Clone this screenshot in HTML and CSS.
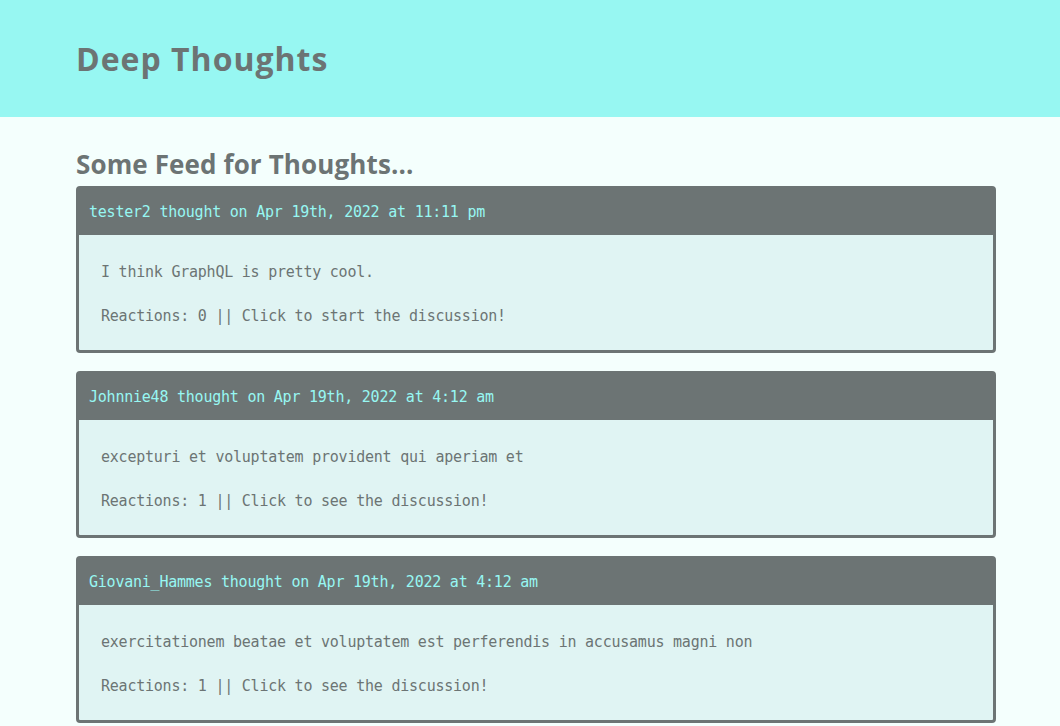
FILE: index.html
```html
<!DOCTYPE html>
<html lang="en">
<head>
<meta charset="utf-8">
<title>Deep Thoughts</title>
<link rel="stylesheet" href="styles.css">
</head>
<body>
<header class="site-header">
  <div class="container">
    <h1 class="brand">Deep Thoughts</h1>
  </div>
</header>
<main class="container">
  <h3 class="feed-title">Some Feed for Thoughts...</h3>
  <div class="card">
    <p class="card-header">tester2 thought on Apr 19th, 2022 at 11:11 pm</p>
    <div class="card-body">
      <p>I think GraphQL is pretty cool.</p>
      <p>Reactions: 0 || Click to start the discussion!</p>
    </div>
  </div>
  <div class="card">
    <p class="card-header">Johnnie48 thought on Apr 19th, 2022 at 4:12 am</p>
    <div class="card-body">
      <p>excepturi et voluptatem provident qui aperiam et</p>
      <p>Reactions: 1 || Click to see the discussion!</p>
    </div>
  </div>
  <div class="card">
    <p class="card-header">Giovani_Hammes thought on Apr 19th, 2022 at 4:12 am</p>
    <div class="card-body">
      <p>exercitationem beatae et voluptatem est perferendis in accusamus magni non</p>
      <p>Reactions: 1 || Click to see the discussion!</p>
    </div>
  </div>
</main>
</body>
</html>
```

FILE: styles.css
```css
html, body {
  margin: 0;
  padding: 0;
}
body {
  background: #f4fffd;
  color: #6c7474;
  font-family: "DejaVu Sans Mono", "Liberation Mono", monospace;
  font-size: 15px;
  letter-spacing: -0.23px;
  overflow: hidden;
}
.container {
  width: 920px;
  margin-left: 76px;
}
.site-header {
  background: #97f7f2;
  height: 117px;
  display: flex;
  align-items: center;
}
.brand {
  margin: 0;
  font-family: "Open Sans", "Lato", sans-serif;
  font-weight: 700;
  font-size: 32px;
  letter-spacing: 1px;
  color: #6c7474;
  line-height: 1;
}
.feed-title {
  margin: 30px 0 5px;
  font-family: "Open Sans", "Lato", sans-serif;
  font-weight: 700;
  font-size: 26px;
  letter-spacing: 0.12px;
  line-height: 34px;
  color: #6c7474;
}
.card {
  border: 3px solid #6c7474;
  border-radius: 4px;
  margin-bottom: 18px;
  background: #e0f4f3;
}
.card-header {
  margin: 0;
  background: #6c7474;
  color: #97f7f2;
  padding: 10px 10px;
  line-height: 26px;
}
.card-body {
  padding: 15px 22px 12px;
}
.card-body p {
  margin: 13px 0;
  line-height: 18px;
  height: 18px;
}
.card-body p + p {
  margin-top: 26px;
}
```
